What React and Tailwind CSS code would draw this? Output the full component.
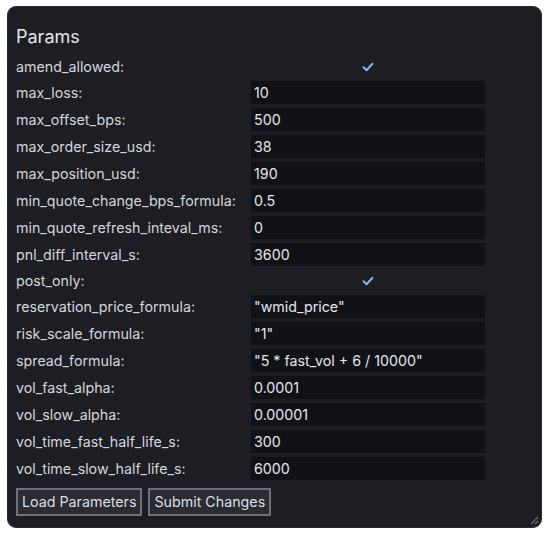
import React from 'react';

const params = [
  { name: 'amend_allowed', type: 'bool', value: true },
  { name: 'max_loss', value: '10' },
  { name: 'max_offset_bps', value: '500' },
  { name: 'max_order_size_usd', value: '38' },
  { name: 'max_position_usd', value: '190' },
  { name: 'min_quote_change_bps_formula', value: '0.5' },
  { name: 'min_quote_refresh_inteval_ms', value: '0' },
  { name: 'pnl_diff_interval_s', value: '3600' },
  { name: 'post_only', type: 'bool', value: true },
  { name: 'reservation_price_formula', value: '"wmid_price"' },
  { name: 'risk_scale_formula', value: '"1"' },
  { name: 'spread_formula', value: '"5 * fast_vol + 6 / 10000"' },
  { name: 'vol_fast_alpha', value: '0.0001' },
  { name: 'vol_slow_alpha', value: '0.00001' },
  { name: 'vol_time_fast_half_life_s', value: '300' },
  { name: 'vol_time_slow_half_life_s', value: '6000' },
];

function Check() {
  return (
    <svg width="12" height="10" viewBox="0 0 12 10" fill="none">
      <path d="M1.5 5.2l3 3 6-6.5" stroke="#8ab4f8" strokeWidth="2" strokeLinecap="round" strokeLinejoin="round" />
    </svg>
  );
}

function ParamRow({ p }) {
  return (
    <>
      <div className={`flex items-center text-[14.25px] text-[#d4d6dc] ${p.type === 'bool' ? 'h-[21px]' : 'h-[23px]'}`}>
        {p.name}:
      </div>
      {p.type === 'bool' ? (
        <div className="flex h-[21px] items-center justify-center">
          <Check />
        </div>
      ) : (
        <div className="flex h-[23px] items-center bg-[#111217] pl-[3px] text-[14.25px] text-[#e4e6ea]">
          {p.value}
        </div>
      )}
    </>
  );
}

export default function App() {
  return (
    <div className="min-h-screen bg-white pl-[7px] pt-[6px]" style={{ fontFamily: 'Inter, "Noto Sans", sans-serif' }}>
      <div className="relative h-[522px] w-[535px] rounded-[9px] border border-[#2a2c33] bg-[#1c1e24] pl-[8px] pt-[18px]">
        <h2 className="mb-[7px] h-[24px] text-[18px] leading-[24px] text-[#e4e6ea]">Params</h2>

        <div className="grid grid-cols-[235px_234px] gap-y-[4px]">
          {params.map((p) => (
            <ParamRow key={p.name} p={p} />
          ))}
        </div>

        <div className="mt-[8px] flex gap-[6px]">
          <button className="h-[28px] border-2 border-[#6f7079] bg-[#2a2b33] px-[4px] text-[14.25px] text-[#dcdee3]">
            Load Parameters
          </button>
          <button className="h-[28px] border-2 border-[#6f7079] bg-[#2a2b33] px-[4px] text-[14.25px] text-[#dcdee3]">
            Submit Changes
          </button>
        </div>

        {/* resize grip */}
        <svg className="absolute bottom-[2px] right-[2px]" width="10" height="10" viewBox="0 0 10 10">
          <path d="M9 2L2 9M9 6L6 9" stroke="#6b6d75" strokeWidth="1.2" />
        </svg>
      </div>
    </div>
  );
}
